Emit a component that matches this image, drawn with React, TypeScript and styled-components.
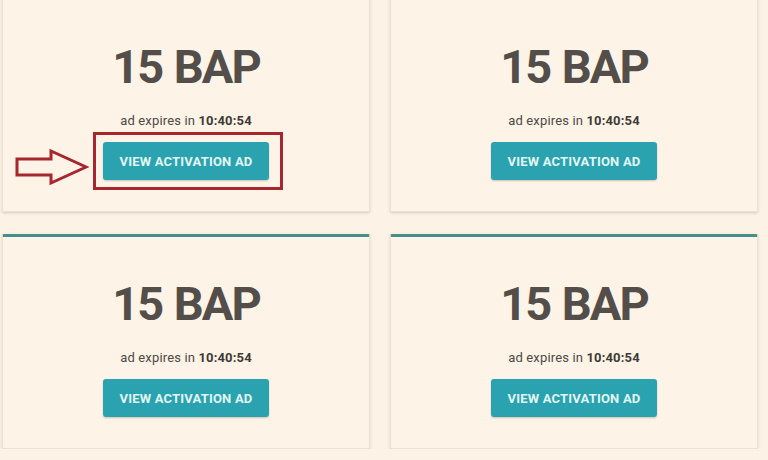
import * as React from 'react'
import styled, { createGlobalStyle } from 'styled-components'

const GlobalStyle = createGlobalStyle`
  html, body {
    margin: 0;
    padding: 0;
    background: #fcf2e6;
    font-family: Roboto, 'Liberation Sans', Arial, sans-serif;
    overflow: hidden;
  }
`

const Grid = styled.div`
  display: grid;
  grid-template-columns: 368px 368px;
  column-gap: 20px;
  row-gap: 22px;
  padding-left: 2px;
  margin-top: -3px;
`

const Card = styled.div`
  position: relative;
  box-sizing: border-box;
  height: 215px;
  display: flex;
  flex-direction: column;
  align-items: center;
  padding-top: 42px;
  background: #fdf3e7;
  border: 1px solid #ebe1d4;
  border-top: 3px solid #448f8b;
  border-radius: 2px;
  box-shadow: 0 1px 3px rgba(90, 70, 50, 0.22);
`

const Amount = styled.div`
  font-size: 47px;
  line-height: 1;
  font-weight: 700;
  letter-spacing: -2px;
  word-spacing: 2px;
  color: #534e4a;
  margin-top: 1px;
`

const Expires = styled.div`
  margin-top: 23px;
  font-size: 13px;
  line-height: 16px;
  letter-spacing: 0.15px;
  color: #4e4945;

  b {
    font-weight: 700;
    color: #3f3a37;
  }
`

const ButtonWrap = styled.div<{ $marked?: boolean }>`
  position: relative;
  margin-top: 13px;

  ${p =>
    p.$marked &&
    `
    &::after {
      content: '';
      position: absolute;
      top: -10px;
      left: -10px;
      right: -14px;
      bottom: -10px;
      border: 3px solid #a8262d;
      pointer-events: none;
    }
  `}
`

const ActivationButton = styled.button`
  width: 166px;
  height: 38px;
  padding: 0;
  border: none;
  border-radius: 3px;
  background: #2aa2b0;
  color: #e2f6f2;
  font-family: Roboto, 'Liberation Sans', Arial, sans-serif;
  font-size: 13px;
  font-weight: 700;
  letter-spacing: 0.2px;
  box-shadow: 0 1px 2px rgba(0, 0, 0, 0.2);
  cursor: pointer;
`

const Arrow = styled.svg`
  position: absolute;
  left: -88px;
  top: 6px;
  width: 74px;
  height: 38px;
`

function PointerArrow() {
  return (
    <Arrow viewBox="0 0 74 38">
      <polygon
        points="2,11 36,11 36,3 71,19 36,35 36,27 2,27"
        fill="none"
        stroke="#a8262d"
        strokeWidth="3"
        strokeLinejoin="miter"
      />
    </Arrow>
  )
}

type AdCardProps = {
  amount: number
  expires: string
  marked?: boolean
}

function AdCard({ amount, expires, marked }: AdCardProps) {
  return (
    <Card>
      <Amount>{amount} BAP</Amount>
      <Expires>
        ad expires in <b>{expires}</b>
      </Expires>
      <ButtonWrap $marked={marked}>
        {marked && <PointerArrow />}
        <ActivationButton>VIEW ACTIVATION AD</ActivationButton>
      </ButtonWrap>
    </Card>
  )
}

const ads = [
  { id: 1, amount: 15, expires: '10:40:54', marked: true },
  { id: 2, amount: 15, expires: '10:40:54' },
  { id: 3, amount: 15, expires: '10:40:54' },
  { id: 4, amount: 15, expires: '10:40:54' },
]

export default function App() {
  return (
    <>
      <GlobalStyle />
      <Grid>
        {ads.map(ad => (
          <AdCard
            key={ad.id}
            amount={ad.amount}
            expires={ad.expires}
            marked={ad.marked}
          />
        ))}
      </Grid>
    </>
  )
}
